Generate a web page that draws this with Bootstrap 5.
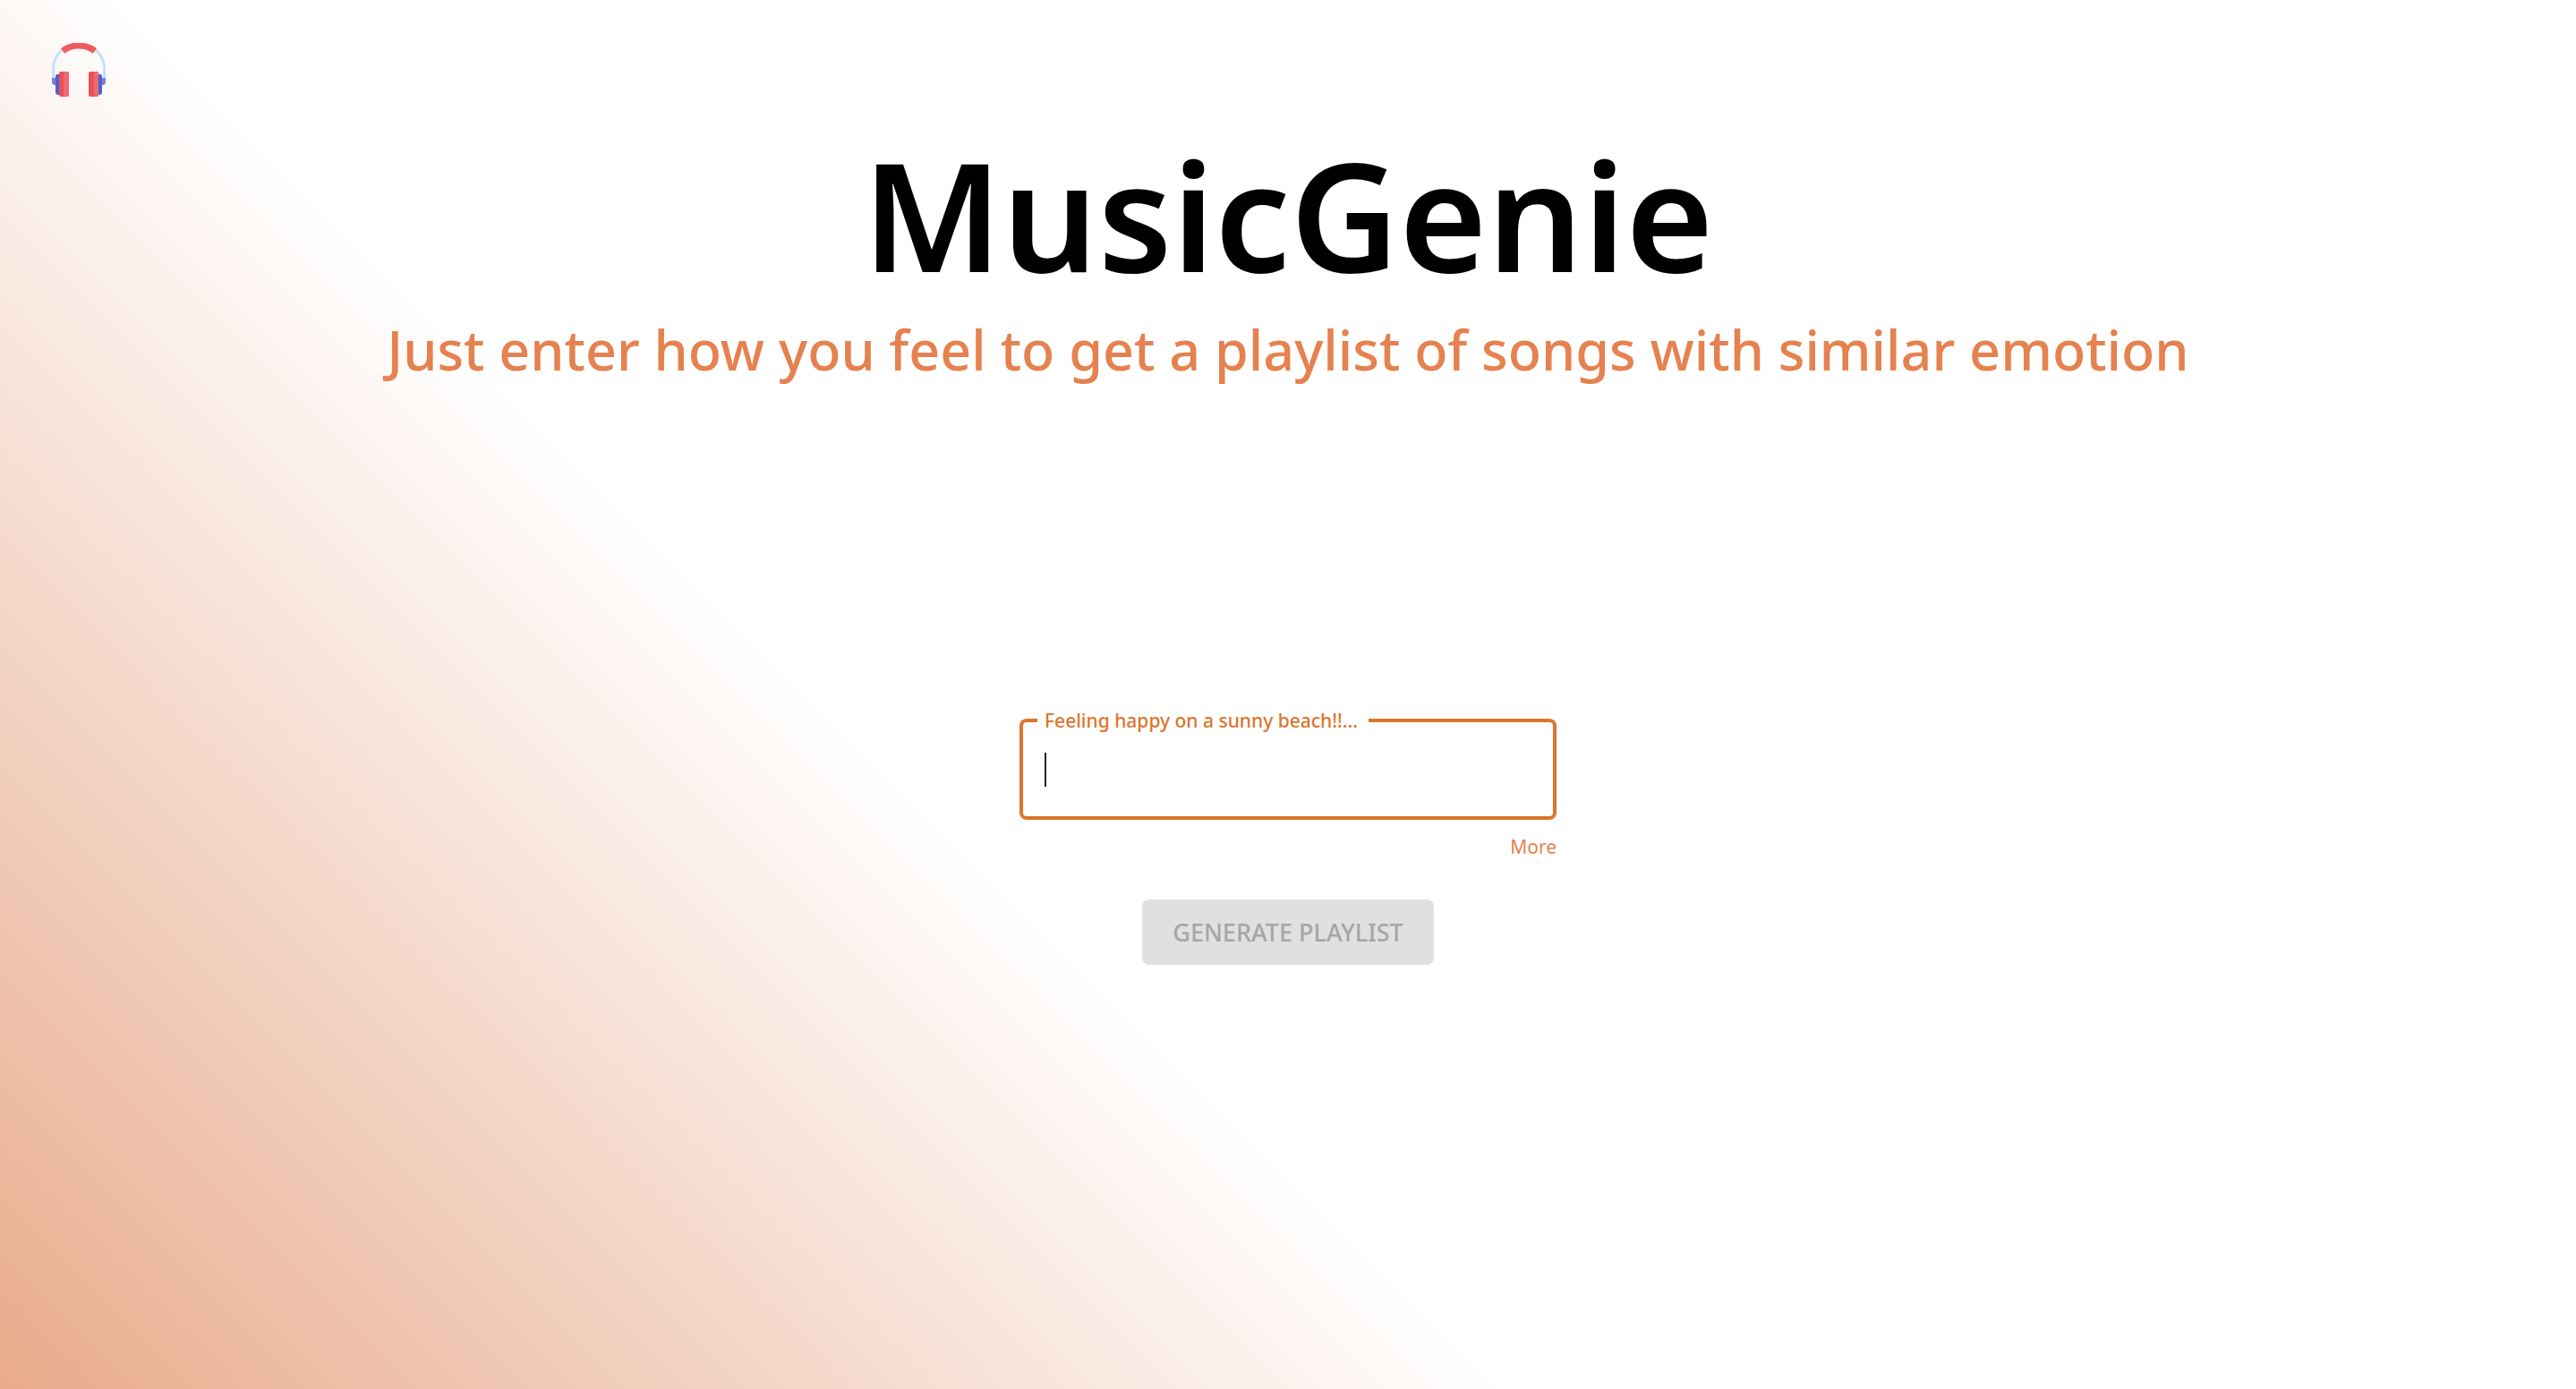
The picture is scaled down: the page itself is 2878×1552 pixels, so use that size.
<!DOCTYPE html>
<html lang="en">
<head>
<meta charset="utf-8">
<meta name="viewport" content="width=device-width, initial-scale=1">
<title>MusicGenie</title>
<link href="https://cdn.jsdelivr.net/npm/bootstrap@5.3.0/dist/css/bootstrap.min.css" rel="stylesheet">
<style>
  body {
    font-family: "Noto Sans", sans-serif;
    background: linear-gradient(45deg, #e8aa8b 0%, #fff 38%) no-repeat;
  }
  .site-header { padding: 48px 58px 0; }
  .site-logo { width: 60px; height: 60px; }
  .site-main { padding-top: 32px; }
  .hero-title { font-size: 168px; line-height: 198px; font-weight: 600; color: #000; margin-bottom: 12px; }
  .hero-tagline { font-size: 61px; line-height: 82px; font-weight: 500; color: #e5824f; }
  .mood-form { max-width: 600px; margin-top: 362px; }
  .mood-field { border: 4px solid #dd752d; border-radius: 8px; padding: 0 16px; }
  .mood-field legend {
    float: none; width: auto; margin: 0; padding: 0 12px 0 8px;
    font-size: 21px; line-height: 22px; font-weight: 500; color: #dd752d;
  }
  .mood-input { height: 96px; padding: 0 8px 8px; font-size: 32px; color: #222; }
  .mood-input:focus { outline: 0; }
  .text-caret { left: 8px; top: 25px; width: 2px; height: 38px; background: #222; }
  .more-link { font-size: 21px; line-height: 30px; color: #e5824f; margin-top: 15px; }
  .generate-btn {
    margin-top: 44px; padding: 16px 34px; border: 0; border-radius: 8px;
    font-size: 27px; line-height: 41px; font-weight: 500;
  }
  .generate-btn:disabled { background: #e0e0e0; color: #a6a6a6; opacity: 1; }
</style>
</head>
<body class="min-vh-100">
<header class="site-header d-flex">
  <a href="#" class="d-block" aria-label="MusicGenie home">
    <svg class="site-logo d-block" viewBox="0 0 60 60" aria-hidden="true">
      <path d="M1.500 42V28C1.500 20 6 12 11 8M58.500 42V28C58.500 20 54 12 49 8" fill="none" stroke="#c5e1fd" stroke-width="3"/>
      <path d="M12 9C22 1 38 1 48 9" fill="none" stroke="#ee5c62" stroke-width="7"/>
      <path d="M0 39h4v8H2q-2-1-2-3zM60 39h-4v8h2q2-1 2-3z" fill="#7d80d6"/>
      <path d="M5 35h5v23H6q-2-1-2-3V37zM55 35h-5v23h4q2-1 2-3V37z" fill="#4f63cd"/>
      <rect x="8" y="32" width="11" height="28" rx="2" fill="#ea5158"/>
      <path d="M13 32h4q2 0 2 2v24q0 2-2 2h-4z" fill="#ee6a70"/>
      <rect x="41" y="32" width="11" height="28" rx="2" fill="#ea5158"/>
      <path d="M47 32h3q2 0 2 2v24q0 2-2 2h-3z" fill="#ee6a70"/>
    </svg>
  </a>
</header>
<main class="site-main container-fluid d-flex flex-column align-items-center">
  <h1 class="hero-title text-center">MusicGenie</h1>
  <p class="hero-tagline text-center mb-0">Just enter how you feel to get a playlist of songs with similar emotion</p>
  <form class="mood-form w-100 d-flex flex-column">
    <fieldset class="mood-field">
      <legend><label class="d-block" for="mood">Feeling happy on a sunny beach!!...</label></legend>
      <div class="position-relative">
        <input class="mood-input d-block w-100 border-0 bg-transparent" type="text" id="mood">
        <span class="text-caret position-absolute" aria-hidden="true"></span>
      </div>
    </fieldset>
    <a href="#" class="more-link align-self-end text-decoration-none">More</a>
    <button type="submit" class="generate-btn btn align-self-center text-uppercase" disabled>Generate Playlist</button>
  </form>
</main>
<script src="https://cdn.jsdelivr.net/npm/bootstrap@5.3.0/dist/js/bootstrap.bundle.min.js"></script>
</body>
</html>
